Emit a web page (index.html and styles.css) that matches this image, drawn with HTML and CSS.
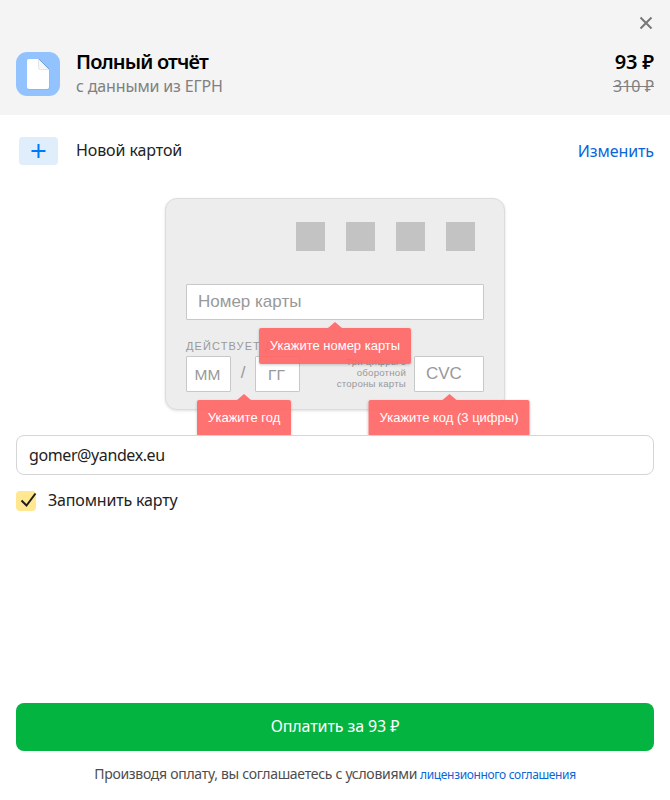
FILE: index.html
```html
<!DOCTYPE html>
<html lang="ru">
<head>
<meta charset="utf-8">
<title>Полный отчёт</title>
<link rel="stylesheet" href="styles.css">
</head>
<body>
<main class="page">
  <header class="header">
    <button class="close" aria-label="Закрыть"><svg width="14" height="14" viewBox="0 0 14 14"><path d="M1.5 1.5l11 11M12.5 1.5l-11 11" fill="none" stroke="#777" stroke-width="2"/></svg></button>
    <svg class="product-icon" width="44" height="44" viewBox="0 0 44 44">
      <rect width="44" height="44" rx="11" fill="#92c3ff"/>
      <path d="M11.5 9Q11.5 7.5 13 7.5H23L33.5 17.5V36Q33.5 38 31.5 38H13Q11.500 38 11.500 36Z" fill="#79aee8" opacity=".55"/>
      <path d="M11 9Q11 7 13 7H22.500L33 17.500V35Q33 37 31 37H13Q11 37 11 35Z" fill="#fff"/>
      <path d="M22.500 7V15.500Q22.500 17.500 24.500 17.500H33Z" fill="#f7f7f8" stroke="#dddfe5" stroke-width=".8"/>
      <path d="M23 7L33 17" stroke="#6fa2dd" stroke-width="1"/>
    </svg>
    <div class="product">
      <h1 class="title">Полный отчёт</h1>
      <p class="subtitle">с данными из ЕГРН</p>
    </div>
    <div class="price">
      <div class="price-new">93 ₽</div>
      <div class="price-old">310 ₽</div>
    </div>
  </header>
  <section class="method">
    <svg class="method-icon" width="39" height="28" viewBox="0 0 39 28"><rect width="39" height="28" rx="4" fill="#e0edfa"/><path d="M19.500 7v14M12.500 14h14" stroke="#0077ff" stroke-width="2" fill="none"/></svg>
    <span class="method-name">Новой картой</span>
    <a class="change">Изменить</a>
  </section>
  <section class="card-frame">
    <div class="card">
      <div class="brands"><i></i><i></i><i></i><i></i></div>
      <div class="field number">Номер карты
        <div class="tip tip-number">Укажите номер карты</div>
      </div>
      <div class="card-row">
        <div class="expiry">
          <div class="caption">ДЕЙСТВУЕТ ДО</div>
          <div class="dates">
            <div class="field date">ММ</div>
            <span class="slash">/</span>
            <div class="field date">ГГ</div>
            <div class="tip tip-year">Укажите год</div>
          </div>
        </div>
        <div class="hint">Три цифры с<br>оборотной<br>стороны карты</div>
        <div class="field cvc">CVC
          <div class="tip tip-cvc">Укажите код (3 цифры)</div>
        </div>
      </div>
    </div>
  </section>
  <div class="email"><span>gomer@yandex.eu</span></div>
  <label class="remember">
    <svg width="22" height="22" viewBox="0 0 22 22"><rect y="2" width="20" height="20" rx="4" fill="#ffe88f"/><path d="M5.500 11.500L10.500 16.500L19.500 4.500" fill="none" stroke="#1f1d19" stroke-width="2"/></svg>
    <span>Запомнить карту</span>
  </label>
  <footer class="footer">
    <button class="pay">Оплатить за 93 ₽</button>
    <p class="legal"><span class="legal-text">Производя оплату, вы соглашаетесь с условиями</span><a class="legal-link">лицензионного соглашения</a></p>
  </footer>
</main>
</body>
</html>
```

FILE: styles.css
```css
* { box-sizing: border-box; }
body { margin: 0; background: #fff; color: #222; font-family: "Noto Sans", sans-serif; font-size: 16px; }
h1, p { margin: 0; }
button { border: 0; padding: 0; font-family: inherit; }
.page { height: 800px; display: flex; flex-direction: column; overflow: hidden; white-space: nowrap; }
.header { position: relative; flex: none; height: 115px; padding: 52px 16px 0; display: flex; align-items: flex-start; background: #f4f4f4; }
.close { position: absolute; top: 16px; right: 17px; width: 14px; height: 14px; background: none; }
.close svg, .product-icon { display: block; }
.product { margin-left: 16px; flex: 1; }
.title { margin-top: -3px; font-size: 20px; line-height: 26px; font-weight: 600; color: #000; letter-spacing: -0.85px; }
.subtitle { margin-top: -1px; font-size: 16px; line-height: 24px; color: #808080; letter-spacing: -0.15px; }
.price { text-align: right; color: #808080; }
.price-new { margin-top: -3px; font-size: 20px; line-height: 26px; font-weight: 600; color: #000; letter-spacing: -0.2px; }
.price-old { margin-top: -1px; font-size: 16px; line-height: 24px; letter-spacing: 0; text-decoration: line-through; }
.method { flex: none; height: 72px; padding: 0 16px 0 19px; display: flex; align-items: center; }
.method-name { margin: -2px 0 0 18px; flex: 1; letter-spacing: -0.1px; }
.change { color: #0a66d8; letter-spacing: -0.1px; }
.card-frame { flex: none; height: 248px; padding-top: 11px; overflow: hidden; font-family: "Liberation Sans", sans-serif; }
.card { width: 340px; height: 212px; margin: 0 auto; padding: 23px 20px 0; border: 1px solid #dcdcdc; border-radius: 12px; background: #ededed; box-shadow: 0 1px 3px rgba(0,0,0,.12); }
.brands { display: flex; justify-content: flex-end; gap: 21px; padding-right: 9px; }
.brands i { width: 29px; height: 29px; background: #c3c3c3; }
.field { position: relative; height: 36px; border: 1px solid #c8c8c8; border-radius: 1px; background: #fff; color: #999; font-size: 17px; line-height: 34px; }
.number { margin-top: 33px; padding-left: 11px; z-index: 3; }
.card-row { display: flex; align-items: flex-end; margin-top: 20px; }
.caption { height: 16px; font-size: 11px; line-height: 13px; letter-spacing: 1.1px; color: #999; }
.expiry { width: 114px; }
.dates { position: relative; display: flex; justify-content: space-between; }
.date { width: 45px; padding-right: 2px; text-align: center; font-size: 15.500px; line-height: 36px; }
.slash { color: #999; font-size: 17px; line-height: 34px; }
.hint { flex: 1; padding: 0 8px 3px 0; text-align: right; color: #999; font-size: 9.700px; line-height: 11px; letter-spacing: .2px; }
.cvc { width: 70px; padding-left: 11px; }
.tip { position: absolute; left: 50%; transform: translateX(-50%); z-index: 4; height: 36px; text-align: center; border-radius: 2px; background: rgba(255,102,102,.92); color: #fff; font-size: 13px; line-height: 36px; box-shadow: 0 1px 3px rgba(0,0,0,.2); }
.tip::before { content: ""; position: absolute; left: 50%; top: -6px; margin-left: -7px; border: 7px solid transparent; border-top: 0; border-bottom: 6px solid #ff7070; }
.tip-number { top: 43px; width: 152px; }
.tip-year { top: 44px; width: 94px; margin-left: 1px; }
.tip-cvc { top: 43px; width: 161px; }
.email { flex: none; height: 40px; margin: 0 16px; padding-left: 12px; border: 1px solid #d5d5d5; border-radius: 8px; line-height: 38px; letter-spacing: -0.4px; }
.remember { flex: none; display: flex; align-items: center; height: 24px; margin: 13px 16px 0; gap: 10px; letter-spacing: -0.17px; }
.footer { margin-top: auto; height: 97px; padding: 0 16px; }
.pay { display: block; width: 100%; height: 48px; padding-bottom: 2px; border-radius: 8px; background: #03b440; color: #fff; font-size: 16px; letter-spacing: -0.1px; }
.legal { display: flex; justify-content: center; align-items: baseline; gap: 3px; margin-top: 13px; line-height: 20px; font-size: 14px; color: #4d4d4d; letter-spacing: -0.29px; }
.legal-link { color: #0a66d8; font-size: 12px; letter-spacing: -0.35px; }
```
